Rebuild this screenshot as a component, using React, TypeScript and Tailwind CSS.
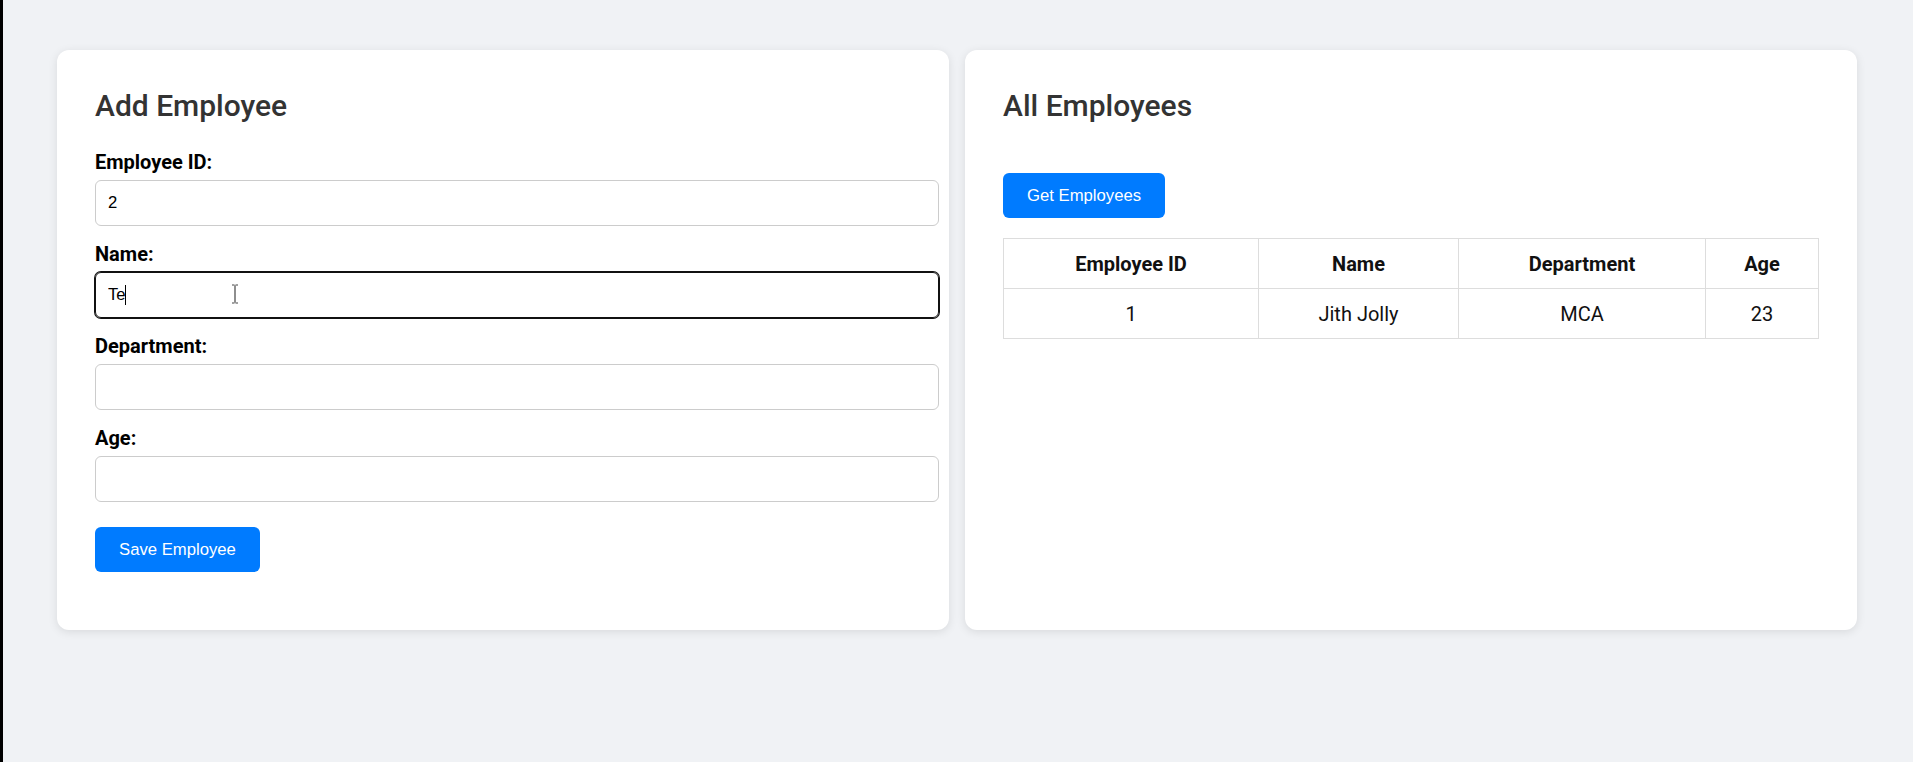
import { useState } from "react";

type Employee = {
  id: string;
  name: string;
  department: string;
  age: string;
};

const fields = [
  { key: "id", label: "Employee ID:" },
  { key: "name", label: "Name:" },
  { key: "department", label: "Department:" },
  { key: "age", label: "Age:" },
] as const;

export default function App() {
  const [form, setForm] = useState<Employee>({
    id: "2",
    name: "Te",
    department: "",
    age: "",
  });
  const [employees] = useState<Employee[]>([
    { id: "1", name: "Jith Jolly", department: "MCA", age: "23" },
  ]);

  return (
    <div className="min-h-screen border-l-[3px] border-black bg-[#f0f2f5] pl-[54px] pr-[56px] pt-[50px] font-['Roboto',sans-serif]">
      <div className="flex gap-4">
        {/* add form */}
        <div className="min-w-0 flex-1 basis-0 rounded-[12px] bg-white px-[38px] pt-[38px] pb-[58px] shadow-[0_2px_10px_rgba(0,0,0,0.1)]">
          <h2 className="mb-[28px] text-[30px] font-medium leading-[35px] text-[#333]">
            Add Employee
          </h2>
          <form onSubmit={(e) => e.preventDefault()}>
            {fields.map((f) => {
              const focused = f.key === "name";
              return (
                <div key={f.key} className="mb-[17px]">
                  <label className="mb-[6px] block text-[20px] font-bold leading-[23px] text-black">
                    {f.label}
                  </label>
                  <div className="relative">
                    <input
                      className={
                        focused
                          ? "box-border block h-[46px] w-[844px] rounded-[6px] border border-[#111] px-[12px] font-['Liberation_Sans',Arial,sans-serif] text-[16.7px] text-black outline-none ring-1 ring-[#111]"
                          : "box-border block h-[46px] w-[844px] rounded-[6px] border border-[#ccc] px-[12px] font-['Liberation_Sans',Arial,sans-serif] text-[16.7px] text-black outline-none"
                      }
                      type="text"
                      value={form[f.key]}
                      onChange={(e) => setForm({ ...form, [f.key]: e.target.value })}
                    />
                    {focused && (
                      <>
                        <span className="absolute left-[30px] top-[13px] h-[20px] w-px bg-black" />
                        <svg
                          className="absolute left-[135px] top-[12px]"
                          width="10"
                          height="20"
                          viewBox="0 0 10 20"
                          fill="none"
                          stroke="#444"
                          strokeWidth="1.2"
                        >
                          <path d="M2 1h2.5M5.5 1H8M5 1.5v17M2 19h2.5M5.5 19H8" />
                        </svg>
                      </>
                    )}
                  </div>
                </div>
              );
            })}
            <button className="mt-[8px] h-[45px] rounded-[6px] bg-[#007bff] px-[24px] font-['Liberation_Sans',Arial,sans-serif] text-[16.7px] text-white">
              Save Employee
            </button>
          </form>
        </div>

        {/* list */}
        <div className="min-w-0 flex-1 basis-0 rounded-[12px] bg-white px-[38px] pt-[38px] pb-[57px] shadow-[0_2px_10px_rgba(0,0,0,0.1)]">
          <h2 className="text-[30px] font-medium leading-[35px] text-[#333]">All Employees</h2>
          <button className="mt-[50px] h-[45px] rounded-[6px] bg-[#007bff] px-[24px] font-['Liberation_Sans',Arial,sans-serif] text-[16.7px] text-white">
            Get Employees
          </button>
          <table className="mt-[20px] w-[816px] border-collapse text-[20px] text-[#111]">
            <thead>
              <tr className="h-[50px]">
                <th className="w-[255px] border border-[#ddd] font-bold">Employee ID</th>
                <th className="w-[200px] border border-[#ddd] font-bold">Name</th>
                <th className="w-[247px] border border-[#ddd] font-bold">Department</th>
                <th className="border border-[#ddd] font-bold">Age</th>
              </tr>
            </thead>
            <tbody>
              {employees.map((emp) => (
                <tr key={emp.id} className="h-[50px] text-center">
                  <td className="border border-[#ddd]">{emp.id}</td>
                  <td className="border border-[#ddd]">{emp.name}</td>
                  <td className="border border-[#ddd]">{emp.department}</td>
                  <td className="border border-[#ddd]">{emp.age}</td>
                </tr>
              ))}
            </tbody>
          </table>
        </div>
      </div>
    </div>
  );
}
